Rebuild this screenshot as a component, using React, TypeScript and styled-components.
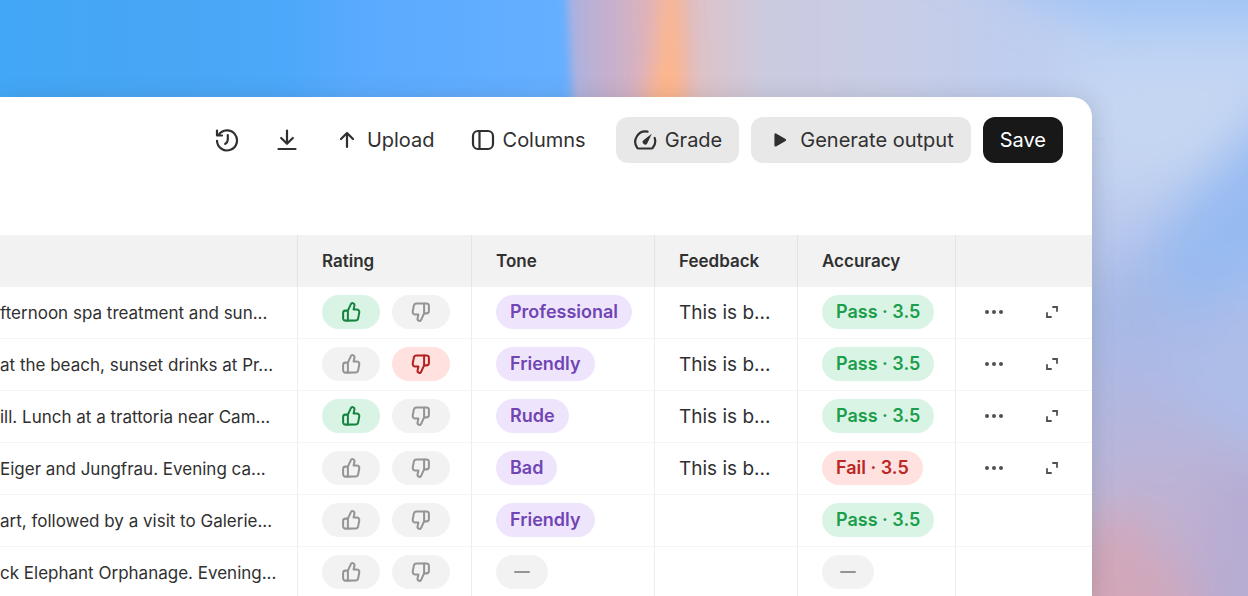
import React from "react";
import styled, { createGlobalStyle, css } from "styled-components";

const GlobalStyle = createGlobalStyle`
  *, *::before, *::after { box-sizing: border-box; }
  html, body, #root { height: 100%; }
  body { margin: 0; overflow: hidden; font-family: Inter, "Liberation Sans", sans-serif; color: #303030; }
  button { font: inherit; color: inherit; border: 0; margin: 0; padding: 0; background: none; cursor: pointer; }
`;

const Desktop = styled.main`
  position: relative;
  isolation: isolate;
  height: 100%;
  overflow: hidden;
  padding: 97px 156px 0 0;
  background: #bccbf0;
`;

const Wallpaper = styled.svg`
  position: absolute;
  inset: 0;
  z-index: -1;
  width: 100%;
  height: 100%;
`;

const Panel = styled.section`
  min-height: 100%;
  overflow: hidden;
  background: #fff;
  border-top-right-radius: 20px;
  box-shadow: 0 4px 24px rgba(70, 70, 70, 0.24);
`;

const Toolbar = styled.header`
  display: flex;
  justify-content: flex-end;
  align-items: center;
  height: 138px;
  padding: 0 29px 52px 0;
  gap: 12px;
`;

const PlainTools = styled.div`
  display: flex;
`;

const ToolButton = styled.button<{ $kind?: "plain" | "soft" | "solid" }>`
  display: flex;
  align-items: center;
  gap: 8px;
  height: 46px;
  padding: 0 18px;
  border-radius: 12px;
  font-size: 20px;
  line-height: 24px;
  white-space: nowrap;
  ${(p) => p.$kind === "soft" && css`background: #e8e8e8; padding: 0 17px;`}
  ${(p) => p.$kind === "solid" && css`background: #181818; color: #fff; padding: 0 17px;`}
`;

const Table = styled.table`
  width: 100%;
  table-layout: fixed;
  border-collapse: separate;
  border-spacing: 0;
`;

const Column = styled.col<{ $width?: number }>`
  ${(p) => p.$width && css`width: ${p.$width}px;`}
`;

const Head = styled.th`
  height: 52px;
  padding: 0 0 1px 24px;
  background: #f2f2f2;
  border-left: 1px solid #e4e4e4;
  font-size: 17px;
  line-height: 24px;
  font-weight: 600;
  text-align: left;
  &:first-child { border-left: 0; }
`;

const Cell = styled.td`
  height: 52px;
  padding: 0 0 1px 24px;
  border-left: 1px solid #ededed;
  border-bottom: 1px solid #f4f4f4;
  white-space: nowrap;
`;

const TextCell = styled(Cell)`
  padding-bottom: 0;
  font-size: 19px;
  line-height: 24px;
`;

const PromptCell = styled(TextCell)`
  padding-left: 0;
  border-left: 0;
  font-size: 17px;
`;

const Group = styled.div<{ $gap: number }>`
  display: flex;
  align-items: center;
  gap: ${(p) => p.$gap}px;
`;

type Tone = "green" | "red" | "purple" | "mute";
const tones: Record<Tone, { fill: string; text: string; icon: string }> = {
  green: { fill: "#d9f4e4", text: "#1a9e4b", icon: "#16843f" },
  red: { fill: "#ffe1e0", text: "#ba2623", icon: "#b3201f" },
  purple: { fill: "#eee5fd", text: "#7145b3", icon: "#7145b3" },
  mute: { fill: "#f2f2f2", text: "#949494", icon: "#949494" },
};

const Vote = styled.button<{ $tone: Tone }>`
  display: grid;
  place-items: center;
  width: 58px;
  height: 34px;
  border-radius: 17px;
  background: ${(p) => tones[p.$tone].fill};
  color: ${(p) => tones[p.$tone].icon};
`;

const Tag = styled.span<{ $tone: Tone }>`
  display: inline-flex;
  align-items: center;
  height: 34px;
  padding: 0 14px;
  border-radius: 17px;
  font-size: 18px;
  line-height: 24px;
  font-weight: 600;
  vertical-align: middle;
  background: ${(p) => tones[p.$tone].fill};
  color: ${(p) => tones[p.$tone].text};
`;

const Empty = styled(Tag)`
  justify-content: center;
  width: 52px;
  padding: 0;
`;

const RowAction = styled.button`
  display: grid;
  place-items: center;
  width: 28px;
  height: 28px;
  color: #505050;
`;

const Line = ({ size = 24, children }: { size?: number; children: React.ReactNode }) => (
  <svg width={size} height={size} viewBox="0 0 24 24" fill="none" stroke="currentColor" strokeWidth="2.2" strokeLinecap="round" strokeLinejoin="round" aria-hidden="true">
    {children}
  </svg>
);

const thumb = (
  <>
    <path d="M8.600 10.500 12 3.200c.4-.8 1.200-1.200 2-.9 1.300.4 2 1.700 1.700 3L14.800 9.200h3.400c1.900 0 3.200 1.700 2.800 3.500l-1.200 6.300A2.900 2.900 0 0 1 17 21.400H6a2.600 2.600 0 0 1-2.600-2.600v-5.700A2.600 2.600 0 0 1 6 10.500z" />
    <path d="M8.600 10.500v10.900" />
  </>
);
const ThumbUp = () => <Line size={22}>{thumb}</Line>;
const ThumbDown = () => <Line size={22}><g transform="rotate(180 12 12)">{thumb}</g></Line>;

type Row = { prompt: string; vote?: "up" | "down"; tone?: string; feedback?: string; score?: string };
const rows: Row[] = [
  { prompt: "fternoon spa treatment and sun...", vote: "up", tone: "Professional", feedback: "This is b...", score: "Pass · 3.5" },
  { prompt: "at the beach, sunset drinks at Pr...", vote: "down", tone: "Friendly", feedback: "This is b...", score: "Pass · 3.5" },
  { prompt: "ill. Lunch at a trattoria near Cam...", vote: "up", tone: "Rude", feedback: "This is b...", score: "Pass · 3.5" },
  { prompt: "Eiger and Jungfrau. Evening ca...", tone: "Bad", feedback: "This is b...", score: "Fail · 3.5" },
  { prompt: "art, followed by a visit to Galerie...", tone: "Friendly", score: "Pass · 3.5" },
  { prompt: "ck Elephant Orphanage. Evening..." },
];

const EmptyTag = () => (
  <Empty $tone="mute">
    <svg width="16" height="4" viewBox="0 0 16 4" aria-label="None"><rect y="1" width="16" height="2" rx="1" fill="currentColor" /></svg>
  </Empty>
);

const Backdrop = () => (
  <Wallpaper viewBox="0 0 1248 596" preserveAspectRatio="none" aria-hidden="true">
    <defs>
      <linearGradient id="blue" gradientUnits="userSpaceOnUse" x1="0" y1="0" x2="570" y2="0">
        <stop offset="0" stopColor="#42a7f7" />
        <stop offset=".3" stopColor="#48a6f5" />
        <stop offset=".5" stopColor="#4ca8fa" />
        <stop offset=".62" stopColor="#59aaff" />
        <stop offset="1" stopColor="#66afff" />
      </linearGradient>
      <linearGradient id="mauve" gradientUnits="userSpaceOnUse" x1="566" y1="0" x2="1120" y2="0">
        <stop offset="0" stopColor="#a9b2e2" />
        <stop offset=".07" stopColor="#c3b0cf" />
        <stop offset=".15" stopColor="#dfb2bb" />
        <stop offset=".25" stopColor="#dcc3ca" />
        <stop offset=".36" stopColor="#cbcbe0" />
        <stop offset=".6" stopColor="#c7cde6" />
        <stop offset=".8" stopColor="#bfcdee" />
        <stop offset="1" stopColor="#c0d2f2" />
      </linearGradient>
      <linearGradient id="side" gradientUnits="userSpaceOnUse" x1="0" y1="0" x2="0" y2="596">
        <stop offset="0" stopColor="#a5c7f6" />
        <stop offset=".1" stopColor="#c3d5f3" />
        <stop offset=".25" stopColor="#c6d7f2" />
        <stop offset=".38" stopColor="#bac9ee" />
        <stop offset=".55" stopColor="#a8b9e8" />
        <stop offset=".7" stopColor="#b4b6de" />
        <stop offset=".85" stopColor="#c0b2d2" />
        <stop offset="1" stopColor="#c2abc8" />
      </linearGradient>
      <filter id="edgeBlur" x="-50%" y="-50%" width="200%" height="200%"><feGaussianBlur stdDeviation="5 2" /></filter>
      <filter id="streakBlur" x="-100%" y="-50%" width="300%" height="200%"><feGaussianBlur stdDeviation="10 4" /></filter>
      <filter id="cloudBlur" x="-50%" y="-50%" width="200%" height="200%"><feGaussianBlur stdDeviation="24" /></filter>
    </defs>
    <rect width="1248" height="140" fill="url(#blue)" />
    <path d="M566-30H1300V140H574z" fill="url(#mauve)" filter="url(#edgeBlur)" />
    <path d="M664-30h16l4 80 4 90h-50l18-80z" fill="#ffb68a" filter="url(#streakBlur)" />
    <g filter="url(#cloudBlur)">
      <rect x="1080" y="-80" width="280" height="800" fill="url(#side)" />
      <path d="M900-80H1320V14L1060 10z" fill="#9fc2f5" />
      <path d="M1300 80 1190 190 1130 270 1180 310 1300 270z" fill="#97bbf1" />
      <path d="M1080 290 1180 250 1150 330 1080 350z" fill="#a6b9e5" />
      <path d="M1150 370 1300 290V460L1240 440z" fill="#adbde8" />
      <path d="M1210 470h110V680H1200z" fill="#b6acd3" />
      <path d="M1040 560 1120 500 1190 600 1200 680H1040z" fill="#d2a7ba" />
    </g>
  </Wallpaper>
);

export default function App() {
  return (
    <Desktop>
      <GlobalStyle />
      <Backdrop />
      <Panel>
        <Toolbar>
          <PlainTools>
            <ToolButton aria-label="History">
              <Line><path d="M3.600 7A10 10 0 1 1 2 12.800M2 2.600V7.500h5M12.800 7v4.400c0 1.900-.7 3.200-2.600 4.500" /></Line>
            </ToolButton>
            <ToolButton aria-label="Download">
              <Line><path d="M12 2.500v13M6.200 10l5.800 5.800 5.800-5.800M3.500 21h17" /></Line>
            </ToolButton>
            <ToolButton>
              <Line><path d="M12 19V5M6 11l6-6 6 6" /></Line>
              Upload
            </ToolButton>
            <ToolButton>
              <Line><rect x="2" y="3" width="20" height="18" rx="5" /><path d="M8.500 3v18" /></Line>
              Columns
            </ToolButton>
          </PlainTools>
          <ToolButton $kind="soft">
            <Line>
              <path d="M14.500 3.700A10.300 10.300 0 0 0 4.200 19.800c.3.400.8.700 1.400.7h12.800c.6 0 1.100-.3 1.400-.7A10.300 10.300 0 0 0 21.700 10" />
              <path d="m18.800 5.800-8.100 6.200a2.500 2.500 0 1 0 3.500 3.500z" fill="currentColor" stroke="none" />
            </Line>
            Grade
          </ToolButton>
          <ToolButton $kind="soft">
            <Line><path d="M7.500 6.500v11l9.500-5.500z" fill="currentColor" /></Line>
            Generate output
          </ToolButton>
          <ToolButton $kind="solid">Save</ToolButton>
        </Toolbar>
        <Table>
          <colgroup>
            <Column />
            <Column $width={174} />
            <Column $width={183} />
            <Column $width={143} />
            <Column $width={158} />
            <Column $width={137} />
          </colgroup>
          <thead>
            <tr>
              <Head aria-label="Prompt" />
              <Head>Rating</Head>
              <Head>Tone</Head>
              <Head>Feedback</Head>
              <Head>Accuracy</Head>
              <Head aria-label="Actions" />
            </tr>
          </thead>
          <tbody>
            {rows.map((r) => (
              <tr key={r.prompt}>
                <PromptCell>{r.prompt}</PromptCell>
                <Cell>
                  <Group $gap={12}>
                    <Vote $tone={r.vote === "up" ? "green" : "mute"} aria-label="Good"><ThumbUp /></Vote>
                    <Vote $tone={r.vote === "down" ? "red" : "mute"} aria-label="Bad"><ThumbDown /></Vote>
                  </Group>
                </Cell>
                <Cell>{r.tone ? <Tag $tone="purple">{r.tone}</Tag> : <EmptyTag />}</Cell>
                <TextCell>{r.feedback}</TextCell>
                <Cell>{r.score ? <Tag $tone={r.score.startsWith("Pass") ? "green" : "red"}>{r.score}</Tag> : <EmptyTag />}</Cell>
                <Cell>
                  {r.feedback && (
                    <Group $gap={30}>
                      <RowAction aria-label="More">
                        <svg width="20" height="6" viewBox="0 0 20 6" fill="currentColor"><circle cx="3" cy="3" r="2" /><circle cx="10" cy="3" r="2" /><circle cx="17" cy="3" r="2" /></svg>
                      </RowAction>
                      <RowAction aria-label="Expand">
                        <svg width="14" height="14" viewBox="0 0 14 14" fill="none" stroke="currentColor" strokeWidth="1.8"><path d="M7.300 2H12v4.700M2 7.300V12h4.700" /></svg>
                      </RowAction>
                    </Group>
                  )}
                </Cell>
              </tr>
            ))}
          </tbody>
        </Table>
      </Panel>
    </Desktop>
  );
}
